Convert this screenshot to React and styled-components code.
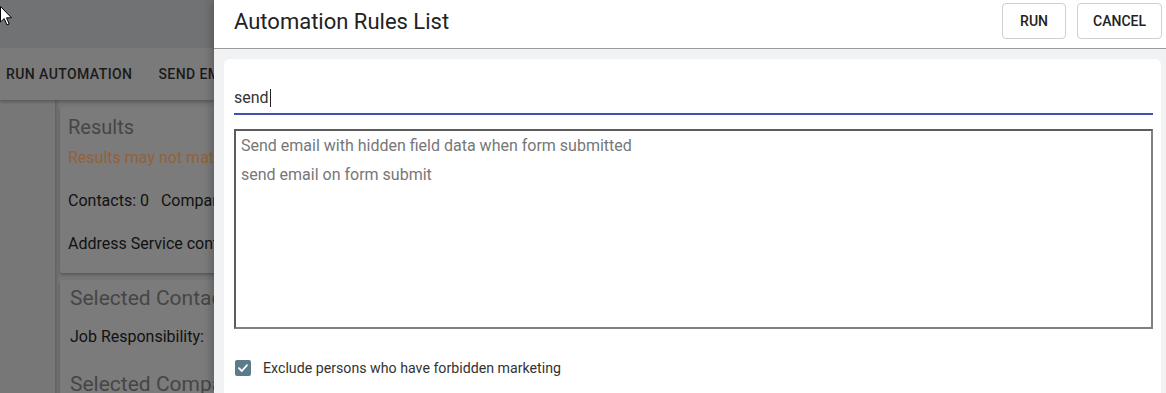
import React from "react";
import styled, { createGlobalStyle } from "styled-components";

const rules = [
  "Send email with hidden field data when form submitted",
  "send email on form submit",
];

const App = () => {
  return (
    <Screen>
      <GlobalStyle />
      <Backdrop>
        <AppBar />
        <Toolbar>
          <ToolButton>Run Automation</ToolButton>
          <ToolButton>Send Email</ToolButton>
        </Toolbar>
        <Main>
          <Sidebar />
          <CardColumn>
            <Card>
              <CardTitle>Results</CardTitle>
              <Warning>Results may not match the current filters</Warning>
              <CardLine>Contacts: 0&nbsp;&nbsp;&nbsp;Companies: 0</CardLine>
              <CardLine>Address Service content</CardLine>
            </Card>
            <Card $shift>
              <CardTitle $large>Selected Contacts</CardTitle>
              <CardLine $tight>Job Responsibility:</CardLine>
              <CardTitle $large $gap>Selected Companies</CardTitle>
            </Card>
          </CardColumn>
        </Main>
      </Backdrop>

      <Drawer>
        <DrawerHeader>
          <Title>Automation Rules List</Title>
          <HeaderButton>Run</HeaderButton>
          <HeaderButton>Cancel</HeaderButton>
        </DrawerHeader>
        <DrawerBody>
          <Panel>
            <SearchField>
              send
              <Caret />
            </SearchField>
            <RuleList>
              {rules.map((r) => (
                <RuleItem key={r}>{r}</RuleItem>
              ))}
            </RuleList>
            <CheckRow>
              <CheckBox>
                <svg width="12" height="12" viewBox="0 0 12 12">
                  <path
                    d="M2 6.2 L4.8 9 L10 3.2"
                    fill="none"
                    stroke="#fff"
                    strokeWidth="1.8"
                    strokeLinecap="round"
                    strokeLinejoin="round"
                  />
                </svg>
              </CheckBox>
              <CheckLabel>Exclude persons who have forbidden marketing</CheckLabel>
            </CheckRow>
          </Panel>
        </DrawerBody>
      </Drawer>

      <Pointer width="14" height="22" viewBox="0 0 14 22">
        <path
          d="M0.5 0.5 L0.5 16 L4.2 12.6 L7 19 L9.2 18 L6.5 11.8 L11.5 11.8 Z"
          fill="#fff"
          stroke="#000"
          strokeWidth="1"
          strokeLinejoin="round"
        />
      </Pointer>
    </Screen>
  );
};

export default App;

const GlobalStyle = createGlobalStyle`
  html, body {
    margin: 0;
    padding: 0;
    overflow: hidden;
    font-family: Roboto, "Liberation Sans", sans-serif;
  }
  * {
    box-sizing: border-box;
  }
`;

const Screen = styled.div`
  position: relative;
  display: flex;
  height: 393px;
  width: 1166px;
  overflow: hidden;
`;

const Backdrop = styled.div`
  flex: 0 0 214px;
  overflow: hidden;
  background: #767676;
  display: flex;
  flex-direction: column;
  white-space: nowrap;
`;

const AppBar = styled.div`
  height: 48px;
  flex: none;
  background: #707274;
`;

const Toolbar = styled.div`
  height: 52px;
  flex: none;
  background: #7a7a7a;
  display: flex;
  align-items: center;
  gap: 26px;
  padding-left: 6px;
  box-shadow: 0 2px 3px rgba(0, 0, 0, 0.25);
  position: relative;
  z-index: 1;
`;

const ToolButton = styled.span`
  font-size: 14px;
  font-weight: 500;
  text-transform: uppercase;
  letter-spacing: 0.42px;
  color: #1a1a1a;
`;

const Main = styled.div`
  flex: 1;
  display: flex;
`;

const Sidebar = styled.div`
  width: 55px;
  flex: none;
  background: #777;
  box-shadow: 2px 0 3px rgba(0, 0, 0, 0.18);
`;

const CardColumn = styled.div`
  display: flex;
  flex-direction: column;
  gap: 7px;
  padding: 7px 0 0 5px;
  width: 320px;
  flex: none;
`;

const Card = styled.div`
  background: #7b7b7b;
  box-shadow: 0 2px 3px rgba(0, 0, 0, 0.25);
  padding: ${(p) => (p.$shift ? "6px 10px 0" : "8px 8px 19px")};
  border-radius: 2px;
`;

const CardTitle = styled.div`
  font-size: ${(p) => (p.$large ? "21px" : "20px")};
  line-height: 24px;
  color: #464646;
  margin-top: ${(p) => (p.$gap ? "25px" : "0")};
`;

const Warning = styled.div`
  margin-top: 9px;
  font-size: 16px;
  line-height: 20px;
  color: #93613a;
`;

const CardLine = styled.div`
  margin-top: ${(p) => (p.$tight ? "17px" : "23px")};
  font-size: 16px;
  line-height: 20px;
  color: #111;
`;

const Drawer = styled.div`
  flex: 1;
  display: flex;
  flex-direction: column;
  background: #f1f2f4;
  box-shadow: -3px 0 8px rgba(0, 0, 0, 0.22);
  position: relative;
  z-index: 2;
`;

const DrawerHeader = styled.div`
  height: 49px;
  flex: none;
  background: #fff;
  border-bottom: 1px solid #9a9a9a;
  display: flex;
  align-items: flex-start;
  gap: 11px;
  padding: 3px 4px 0 20px;
`;

const Title = styled.div`
  flex: 1;
  font-size: 22px;
  line-height: 37px;
  color: #222;
`;

const HeaderButton = styled.button`
  height: 36px;
  min-width: 64px;
  padding: 0 15px;
  background: #fff;
  border: 1px solid #cfcfcf;
  border-radius: 4px;
  font-family: Roboto, "Liberation Sans", sans-serif;
  font-size: 14px;
  font-weight: 500;
  text-transform: uppercase;
  color: #222;
  cursor: pointer;
`;

const DrawerBody = styled.div`
  flex: 1;
  display: flex;
  padding: 10px 5px 0 10px;
`;

const Panel = styled.div`
  flex: 1;
  background: #fff;
  border-radius: 6px 6px 0 0;
  padding: 24px 8px 0 10px;
`;

const SearchField = styled.div`
  height: 32px;
  border-bottom: 2px solid #3f51b5;
  font-size: 16px;
  line-height: 30px;
  color: #333;
  display: flex;
  align-items: center;
`;

const Caret = styled.span`
  width: 1px;
  height: 18px;
  margin-left: 1px;
  background: #222;
`;

const RuleList = styled.div`
  margin-top: 14px;
  height: 200px;
  border: 2px solid;
  border-color: #5c5c5c #808080 #808080 #5c5c5c;
  padding: 0 5px;
`;

const RuleItem = styled.div`
  font-size: 16px;
  line-height: 29px;
  color: #777;
`;

const CheckRow = styled.div`
  margin-top: 31px;
  display: flex;
  align-items: center;
  gap: 12px;
  padding-left: 1px;
`;

const CheckBox = styled.span`
  width: 16px;
  height: 16px;
  border-radius: 2px;
  background: #5c7b8b;
  display: flex;
  align-items: center;
  justify-content: center;
`;

const CheckLabel = styled.span`
  font-size: 14.2px;
  color: #333;
`;

const Pointer = styled.svg`
  position: absolute;
  left: 0;
  top: 6px;
  z-index: 5;
`;
